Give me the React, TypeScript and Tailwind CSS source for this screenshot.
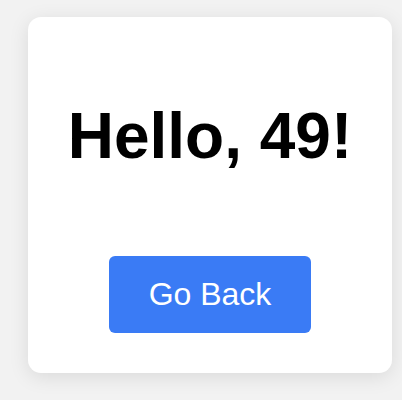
export default function App() {
  return (
    <div className="min-h-[400px] bg-[#f2f2f2] pl-[28px] pt-[17px] pb-[26px] font-['Liberation_Sans',Arial,sans-serif]">
      <div className="flex w-[364px] flex-col items-center rounded-[13px] bg-white p-10 shadow-[0_4px_20px_rgba(0,0,0,0.1)]">
        <h1 className="my-[0.67em] whitespace-nowrap text-center text-[64px] leading-[1.15] font-bold text-black">
          Hello, 49!
        </h1>
        <button className="mt-10 whitespace-nowrap rounded-md bg-[#3a7bf5] px-10 py-5 text-[32px] leading-[1.15] text-white">
          Go Back
        </button>
      </div>
    </div>
  )
}
